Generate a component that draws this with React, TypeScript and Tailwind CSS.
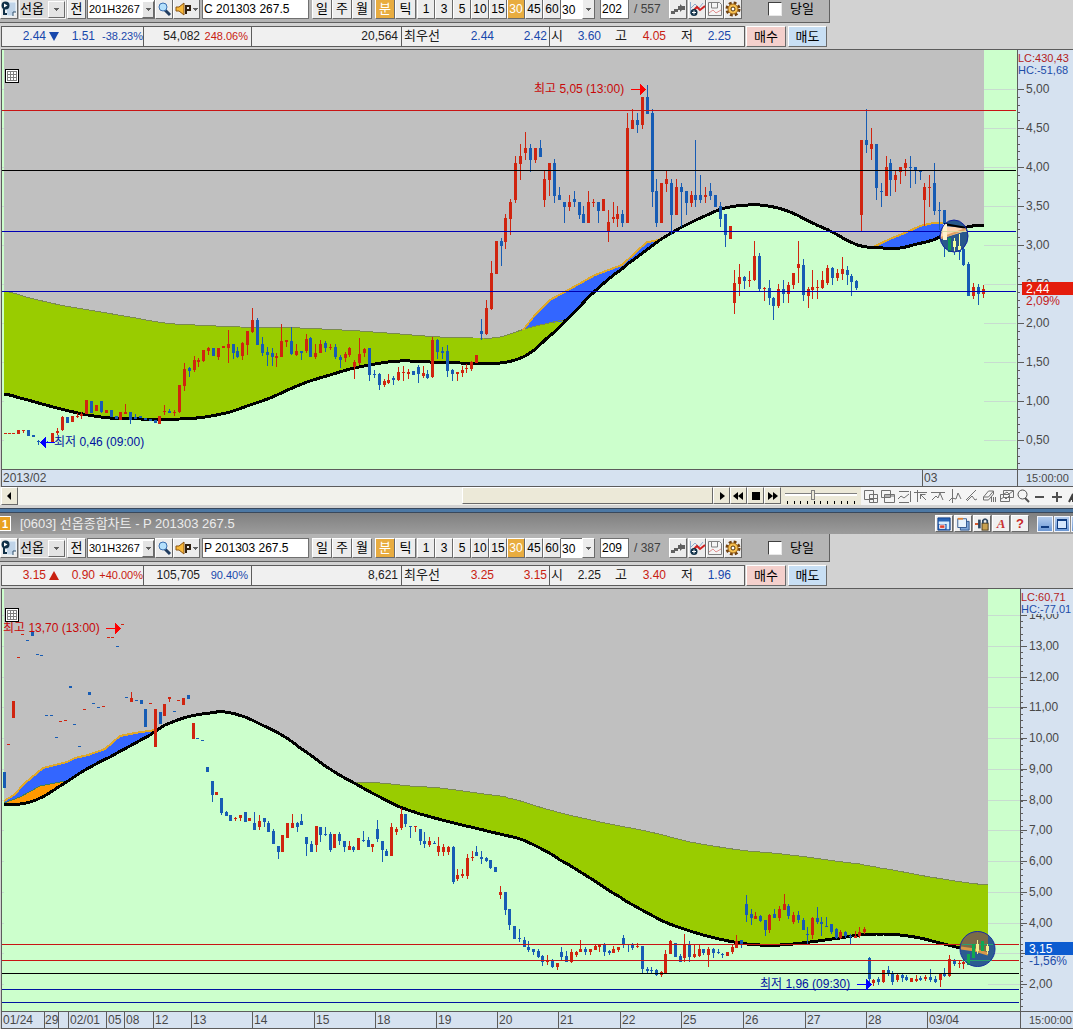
import type { ReactNode } from "react";
import clsx from "clsx";

const FONT = "font-['Liberation_Sans','Noto_Sans_CJK_KR',sans-serif]";
const BEVEL = "border border-t-white border-l-white border-r-[#6a6a6a] border-b-[#6a6a6a]";
const RED = "#d0240f";
const BLUE = "#175cb4";

type Bar = { color: string; x: number; high: number; low: number; top: number; bottom: number };
type Shape = { points: string; fill: string };
type Curve = { points: string; stroke: string; width: number };
type Level = { y: number; color: string };

type ChartSpec = {
  left: number;
  top: number;
  width: number;
  height: number;
  dataEnd: number;
  axisWidth: number;
  bars: Bar[];
  shapes: Shape[];
  curves: Curve[];
  levels: Level[];
  scale: { label: string; y: number }[];
  minor: number;
  lc: string;
  hc: string;
  price: { value: string; rate: string; y: number; up: boolean };
  high: { text: string; x: number; y: number; arrow: number };
  low: { text: string; x: number; y: number; arrow: number; toLeft: boolean };
  marker: ReactNode;
};

// "r18 430 434" is a plain body, two more numbers give the body inside the wick
function parseBars(source: string): Bar[] {
  return source.split(",").map((item) => {
    const entry = item.trim();
    const [x, high, low, top = high, bottom = low] = entry.slice(1).split(" ").map(Number);
    return { color: entry[0] === "r" ? RED : BLUE, x, high, low, top, bottom };
  });
}

type Point = [number, number];

const toPoints = (source: string): Point[] => source.split(" ").map((p) => p.split(",").map(Number) as Point);

// Catmull-Rom through the given points
function smooth(source: string): string {
  const pts = toPoints(source);
  const out: Point[] = [];
  for (let i = 0; i < pts.length - 1; i++) {
    const p0 = pts[Math.max(0, i - 1)];
    const p1 = pts[i];
    const p2 = pts[i + 1];
    const p3 = pts[Math.min(pts.length - 1, i + 2)];
    for (let k = 0; k < 6; k++) {
      const t = k / 6;
      const y =
        0.5 *
        (2 * p1[1] +
          (p2[1] - p0[1]) * t +
          (2 * p0[1] - 5 * p1[1] + 4 * p2[1] - p3[1]) * t * t +
          (3 * p1[1] - p0[1] - 3 * p2[1] + p3[1]) * t * t * t);
      out.push([p1[0] + (p2[0] - p1[0]) * t, Math.round(y * 10) / 10]);
    }
  }
  out.push(pts[pts.length - 1]);
  return out.map((p) => p.join(",")).join(" ");
}

// the part of a curve between two x values, walked right to left
function back(source: string, from: number, to: number): string {
  return toPoints(source)
    .filter((p) => p[0] <= from && p[0] >= to)
    .reverse()
    .map((p) => p.join(","))
    .join(" ");
}

const CALL_BARS = parseBars(
  "r5 433 434,r9 433 434,r13 433 434,r18 430 434,r23 430 433 430 431,b28 430 436,b33 435 437,b38 440 445 441 442,b47 441 443 442 443,r52 433 442,r57 428 435 431 433,r62 416 431 417 430,b67 417 423,r72 416 422,r77 413 418 416 417,r81 412 419 414 416,r86 400 414,b91 401 413,r96 405 411,b101 401 413 401 412,r106 410 413,b111 410 417,b116 416 419,r120 412 420,r125 404 414 412 414,b130 412 424 412 420,b135 414 419 417 419,b140 416 418,b145 418 420,b150 419 421,b155 420 423,r159 416 424,r164 405 415 411 412,b169 409 413 411 413,r174 410 416 412 413,r179 385 413 385 412,r184 363 391 369 386,b189 367 377 368 371,r194 356 372 360 370,r198 358 367 360 362,r203 350 362 350 361," +
    "r208 347 355 348 351,b213 348 356,r218 348 360 348 357,r223 346 348,r228 330 363 344 348,b233 344 359 344 353,b237 347 358 351 357,r242 342 360 343 356,r247 331 355 331 345,r252 308 333 320 332,b257 318 345 320 345,b262 337 356 344 353,b267 347 366 352 355,b272 348 366 353 357,r276 353 367 356 358,r281 324 357 341 357,r286 340 347 340 342,b291 327 355 341 354,r296 344 356 351 355,b301 351 360 351 353,r306 334 353 339 351,b310 337 357 338 357,r315 344 359 353 357,r320 340 353 344 353,b325 341 352 343 348,r330 344 350 347 348,b335 344 359 347 357,b340 355 368 357 360,r345 352 362 354 358,r349 347 357 348 355,r354 360 379 362 367,r359 338 365 354 363,r364 348 357 349 353,b369 348 381 348 375,b374 370 378 374 375,b379 373 390 374 385,r384 379 387 381 385,r388 374 384 380 383,b393 376 385 378 380,r398 367 381 372 380," +
    "r403 366 381 372 373,r408 369 379 372 374,b413 371 375,b418 365 383 367 374,r423 366 378 373 376,b427 370 379 374 378,r432 337 378 340 377,b437 339 359 340 352,b442 347 359 351 353,b447 345 377 351 371,b452 369 381 370 374,r457 372 381 372 374,r462 366 377 370 373,r466 364 373 368 369,r471 361 371 362 369,r476 355 363,b481 319 340 331 334,r486 300 335 308 334,r491 261 310 273 309,r496 241 274,b501 238 266 241 246,r505 214 249 218 242,r510 199 235 202 219,r515 156 203 163 200,r520 144 180 156 164,r525 132 160 148 153,b530 144 172 148 160,r535 148 163 148 160,b540 140 157 148 157,r544 171 207 179 200,r549 163 196 163 180,b554 159 203 163 196,b559 187 200 195 200,b564 202 223 202 207,r569 195 211 202 207,b574 191 207 199 202,b579 202 219 202 215,b583 206 223 214 223,r588 191 223 202 223,r593 199 207 202 203,b598 202 223 202 211," +
    "r603 199 211,r608 210 242 222 232,r613 202 223 217 219,r617 206 227 214 219,b622 210 227 214 223,r627 113 223 128 223,r632 109 129 120 129,b637 113 133 120 125,r642 97 129 97 125,b647 85 114 97 114,b652 109 207 113 192,b656 179 227 191 223,r661 183 223,r666 171 192 179 184,b671 179 235 183 215,r676 179 215 187 215,b681 183 227 187 192,b686 191 215 191 203,r691 191 207 195 203,b695 140 207 195 200,b700 175 203 195 200,r705 187 203 195 197,b710 183 200 191 196,b715 195 207,b720 202 227 206 219,b725 214 247 214 235,r730 226 239,r734 270 314 283 303,r739 264 296 277 284,b744 276 289 277 281,r749 271 287 280 281,r754 241 281 256 280,b759 253 291 256 289,r764 287 301 288 289,b769 280 305 288 298,b773 297 320 298 306,r778 284 308 289 306,b783 280 303 289 294,r788 282 303 285 294,r793 273 289 273 285,r798 241 283 264 268," +
    "b803 259 301 265 295,r808 287 308 289 296,r812 270 299 287 290,r817 280 299 287 288,r822 271 289 280 288,r827 265 285 268 283,b832 267 285 268 278,r837 269 281 273 278,r842 257 280 269 274,b847 266 285 270 275,b851 274 296 276 282,b856 280 290 281 288,r861 140 231 140 215,b866 109 153 140 145,r871 128 160 144 149,b876 144 200 144 188,b881 183 207 191 192,r886 156 196 167 196,b890 159 196 163 180,r895 171 192 175 180,r900 167 184 167 172,r905 159 176 163 168,b910 156 188 167 168,b915 167 184 167 171,b920 170 180 170 172,r924 183 226 187 200,r929 175 207 187 188,b934 163 215 183 211,b939 202 230 210 211,b944 210 257 210 224,b949 238 252 244 250,b954 239 255 244 247,b959 240 260 246 252,b963 241 266 249 265,b968 262 296 264 296,r973 283 299 287 296,b978 284 305 287 294,r983 285 298 289 294",
);

const PUT_BARS = parseBars(
  "r8 744 745,r18 657 658,r22 634 635,r60 721 722,r65 720 721,r84 709 710,r103 706 707,r108 637 638,r112 637 638,r122 624 625,r150 703 704,r178 700 701,b27 640 641,b37 654 655,b41 655 656,b46 715 716,b51 715 716,b56 737 738,b74 724 725,b79 746 747,b93 703 704,b98 707 708,b117 646 647,b126 697 698,b136 700 701,b174 711 712,b197 738 739,b202 740 741,b4 772 788,r13 701 718,b32 632 636,b70 686 688,b89 692 695,r131 692 702 698 702,b141 700 704,b145 709 727,r155 709 747,b160 712 724,r164 704 716,r169 697 702 697 699,r183 698 705,b188 695 699,r193 723 739,b207 767 772,b212 781 802 781 795,r216 792 795,b221 798 815 798 813,b226 811 816 812 816,b230 815 821,r235 817 821 818 819,r240 815 821 815 818,b245 812 822,r249 818 821,b254 812 830 823 830,r259 815 830 821 827,b264 818 827 818 822,b268 821 832 823 832,b273 829 844 831 844,b278 846 859 846 852," +
    "r282 835 852,r287 823 838,r292 814 828 823 828,b297 822 832 823 827,b301 814 825 821 825,b306 837 856 837 844,b311 841 852 844 852,r316 826 852 826 845,b320 827 842 827 835,b325 827 836 834 835,b330 832 852 834 850,r334 834 848,b339 832 845 834 841,b344 841 852 841 847,r349 841 850 846 850,b353 846 852 847 850,r358 838 850,b363 831 842 840 841,b368 837 847 840 847,r372 844 852 844 847,b377 820 842 829 839,b382 841 862 841 850,b386 849 856 851 856,r391 823 856 827 856,r396 827 835 829 832,r401 808 830 814 828,b405 814 827 814 824,b410 826 838 826 827,r415 826 832 826 827,b420 829 845 829 841,b424 832 848 841 844,r429 837 847 841 845,b434 841 844 843 844,r438 837 856 846 852,r443 844 856 847 852,r448 846 855 847 852,b453 846 884 847 882,r457 869 881 875 879,r462 869 878 874 876,r467 854 879 858 876,r472 851 861 857 858," +
    "b476 846 856 852 856,b481 851 864 857 859,b486 857 862 858 861,b490 860 869 860 868,b495 867 872,r500 886 899 892 895,b505 892 915 892 910,b509 909 930 909 925,b514 926 939,b519 929 942 938 939,b524 937 947 940 947,b528 941 952 947 950,b533 949 955 949 952,b538 949 958 951 957,b542 955 966 956 962,r547 955 965 961 962,b552 959 968 960 967,r557 963 970 963 967,b561 947 960 952 957,b566 951 962 956 962,r571 949 963 952 962,r576 951 957 952 955,r580 940 952 949 952,b585 947 955 949 952,r590 949 955 949 952,r595 944 950 946 950,r599 945 952 945 947,b604 943 956 944 952,b609 950 955 951 953,r613 946 953 949 953,r618 947 952 947 950,b623 935 948 938 945,b628 944 952 944 945,b632 943 950 945 948,r637 943 948 946 947,b642 946 973 946 969,b647 967 973 969 971,b651 967 973 970 971,b656 969 976 970 975,r661 971 977 972 975,r665 950 973 954 973,r670 940 954 941 954," +
    "b675 943 957,b680 954 962 956 962,r684 934 962 944 958,b689 941 962 944 957,r694 944 958 954 957,r699 945 957 949 956,b703 949 955 949 953,r708 947 967 949 955,b713 948 958 949 953,b718 949 954 952 953,b722 953 958 954 955,r727 952 956,r732 945 954 947 952,r736 935 948 941 948,b741 940 948 940 944,b746 895 922 904 915,b751 909 925 914 918,r755 912 919 916 919,b760 915 922 916 921,b765 920 936 920 930,r769 914 933 915 930,b774 909 918 914 918,r779 906 921 909 918,r784 894 910 904 910,b788 904 919 906 916,r793 912 924 915 922,b798 911 923 915 920,b803 918 930 920 930,b807 927 944 934 935,r812 917 939 918 935,b817 907 924 918 922,b821 917 936 922 924,b826 917 927 926 927,b831 924 934 924 932,b836 928 939 929 938,r840 930 939 932 938,b845 931 938 932 936,b850 934 944 936 937,r855 931 938 936 938,r859 927 938 932 936,r864 927 934 929 932," +
    "b869 957 985 958 979,r873 979 986 980 983,b878 977 985 979 982,r883 970 983 970 982,b888 966 976 970 974,b892 971 985 973 982,r897 973 982 975 980,b902 973 982 975 978,b906 975 981 977 980,r911 978 982,r916 975 982 979 981,b920 976 981 978 980,r925 975 981 977 979,b930 969 982 977 980,b935 976 983 979 982,r940 973 987 974 980,b944 968 977 973 976,r949 955 977 959 976,b954 959 966 960 964,r959 961 968 963 964,r963 959 969 962 964,b968 952 965 955 962",
);

const CALL_MA = smooth(
  "4,394 20,398 42,404 65,410 88,415 110,418 140,419 180,419 205,417 230,412 250,405 270,398 290,389 310,381 330,375 350,369 375,364 400,361 430,362 460,363 500,363 515,360 530,353 546,339 565,321 594,292 622,269 640,255 660,240 680,228 705,216 725,208 748,205 768,206 790,212 815,224 830,231 853,243 867,247 883,248 900,248 917,244 933,240 948,233 967,227 984,225",
);
const CALL_UPPER = smooth(
  "4,291 30,298 60,305 95,311 130,317 165,323 195,325 240,327 300,328 360,331 400,334 440,337 480,338 500,337 525,329 545,324 565,320",
);
const CALL_FAST_1 = "523,330 535,315 550,300 570,289 595,275 622,265 636,252 647,242 655,241 665,237";
const CALL_FAST_2 = "873,247 890,239 907,232 920,226 933,223 945,223 966,227";

const PUT_MA = smooth(
  "4,804 20,804 38,799 60,786 85,770 110,757 130,746 150,735 165,725 187,717 210,713 225,712 245,717 262,725 280,734 300,748 330,769 356,784 380,797 400,807 420,814 450,822 475,828 500,834 520,839 540,848 560,860 590,878 620,897 640,909 665,922 690,931 715,938 740,943 760,945 780,945 810,942 840,938 860,935 880,934 900,935 920,938 940,943 960,948 988,953",
);
const PUT_UPPER = smooth(
  "354,782 380,783 410,786 440,788 470,792 500,796 508,798 550,810 587,819 620,826 650,832 690,842 740,850 790,855 860,864 880,868 930,877 988,885",
);
const PUT_FAST = "4,801 14,795 25,783 43,768 67,762 75,758 88,755 105,749 120,736 135,733 155,730";
const PUT_MID = "4,803 20,797 40,786 65,781";

const CALL: ChartSpec = {
  left: 2,
  top: 50,
  width: 1015,
  height: 419,
  dataEnd: 984,
  axisWidth: 55,
  bars: CALL_BARS,
  shapes: [
    { points: `${CALL_MA} 984,470 4,470`, fill: "#ccffcc" },
    { points: `${CALL_UPPER} ${back(CALL_MA, 565, 4)}`, fill: "#99cc00" },
    { points: `${CALL_FAST_1} ${back(CALL_MA, 660, 565)} 545,324 525,329`, fill: "#3366ff" },
    { points: `${CALL_FAST_2} ${back(CALL_MA, 966, 875)}`, fill: "#3366ff" },
  ],
  curves: [
    { points: CALL_UPPER, stroke: "#7a8a50", width: 1 },
    { points: CALL_FAST_1, stroke: "#e0a828", width: 2 },
    { points: CALL_FAST_2, stroke: "#e0a828", width: 2 },
    { points: CALL_MA, stroke: "#000", width: 3 },
  ],
  levels: [
    { y: 110, color: "#c81414" },
    { y: 170, color: "#000" },
    { y: 231, color: "#0000b4" },
    { y: 291, color: "#0000b4" },
  ],
  scale: ["5,00", "4,50", "4,00", "3,50", "3,00", "2,50", "2,00", "1,50", "1,00", "0,50"].map((label, i) => ({
    label,
    y: Math.round(89 + i * 39.05),
  })),
  minor: 5,
  lc: "LC:430,43",
  hc: "HC:-51,68",
  price: { value: "2,44", rate: "2,09%", y: 282, up: true },
  high: { text: "최고 5,05 (13:00)", x: 534, y: 89, arrow: 631 },
  low: { text: "최저 0,46 (09:00)", x: 54, y: 442, arrow: 40, toLeft: true },
  marker: (
    <g>
      <ellipse cx="954" cy="236" rx="14" ry="16" fill="#28588c" />
      <path d="M943 226 L966 228 L966 231 L940 239 Z" fill="#ffd2b0" />
      <path d="M944 224 L967 228" stroke="#000" strokeWidth="2" />
      <path d="M941 238 L952 234 L966 229" stroke="#e0a060" strokeWidth="2" fill="none" />
      <path d="M945 224 v16" stroke="#fff2cc" strokeWidth="4" />
      <path d="M949.5 238 v14" stroke="#109858" strokeWidth="3" />
      <path d="M954.5 238 v14 M959.5 234 v16" stroke="#f0ffa0" strokeWidth="1" />
      <path d="M954.5 241 v6 M959.5 246 v4" stroke="#f0ffa0" strokeWidth="3" />
      <path d="M941 231.5 H967" stroke="#d8d8a0" />
      <ellipse cx="954" cy="236" rx="14" ry="16" fill="none" stroke="#1020a0" />
    </g>
  ),
};

const PUT: ChartSpec = {
  left: 2,
  top: 589,
  width: 1018,
  height: 422,
  dataEnd: 988,
  axisWidth: 52,
  bars: PUT_BARS,
  shapes: [
    { points: `${PUT_MA} 988,1012 4,1012`, fill: "#ccffcc" },
    { points: `${PUT_UPPER} ${back(PUT_MA, 988, 356)}`, fill: "#99cc00" },
    { points: `${PUT_FAST} ${back(PUT_MA, 155, 60)} 65,781 40,786 20,797 4,803`, fill: "#3366ff" },
    { points: `${PUT_MID} ${back(PUT_MA, 65, 4)}`, fill: "#ff9900" },
  ],
  curves: [
    { points: PUT_UPPER, stroke: "#7a8a50", width: 1 },
    { points: PUT_MID, stroke: "#3c8060", width: 1 },
    { points: PUT_FAST, stroke: "#e0a828", width: 2 },
    { points: PUT_MA, stroke: "#000", width: 3 },
  ],
  levels: [
    { y: 944, color: "#c81414" },
    { y: 960, color: "#c81414" },
    { y: 973, color: "#000" },
    { y: 989, color: "#0014a0" },
    { y: 1002, color: "#0014a0" },
  ],
  scale: ["14,00", "13,00", "12,00", "11,00", "10,00", "9,00", "8,00", "7,00", "6,00", "5,00", "4,00", "", "2,00"].map(
    (label, i) => ({ label, y: Math.round(615 + i * 30.75) }),
  ),
  minor: 5,
  lc: "LC:60,71",
  hc: "HC:-77,01",
  price: { value: "3,15", rate: "-1,56%", y: 942, up: false },
  high: { text: "최고 13,70 (13:00)", x: 3, y: 628, arrow: 106 },
  low: { text: "최저 1,96 (09:30)", x: 760, y: 984, arrow: 857, toLeft: false },
  marker: (
    <g>
      <circle cx="977.5" cy="949" r="17.5" fill="#2c5c90" />
      <path d="M960 949 A17.5 17.5 0 0 1 988 935 V954 L975 950 Z" fill="#7a6a48" />
      <path d="M961 948 L975 950 L988 954" stroke="#d89848" strokeWidth="3" fill="none" />
      <path d="M962 944.5 H993 M962 960.5 H992" stroke="#28a070" />
      <path d="M968.5 954 v11 M973.5 944 v14 M982.5 941 v10" stroke="#10a850" strokeWidth="3" />
      <path d="M977.5 940 v14 M987.5 944 v10" stroke="#f0f090" />
      <path d="M977.5 944 v7 M987.5 946 v5" stroke="#f0f090" strokeWidth="3" />
      <circle cx="977.5" cy="949" r="17.5" fill="none" stroke="#1830a0" />
    </g>
  ),
};

function Arrow({ x, y, color, toLeft }: { x: number; y: number; color: string; toLeft?: boolean }) {
  const points = toLeft
    ? `${x},${y + 0.5} ${x + 6},${y - 5} ${x + 6},${y + 6}`
    : `${x + 15},${y + 0.5} ${x + 9},${y - 5} ${x + 9},${y + 6}`;
  return (
    <g fill={color}>
      <rect x={x} y={y} width="15" height="1" />
      <polygon points={points} />
    </g>
  );
}

function Note({ spec, text, x, y, className }: { spec: ChartSpec; text: string; x: number; y: number; className: string }) {
  return (
    <span
      className={clsx("absolute -translate-y-1/2 text-[12px] whitespace-nowrap", className)}
      style={{ left: `${((x - spec.left) / spec.width) * 100}%`, top: y - spec.top }}
    >
      {text}
    </span>
  );
}

function Plot({ spec }: { spec: ChartSpec }) {
  const { left, top, width, height, dataEnd } = spec;
  return (
    <div className="relative min-w-0 flex-1 bg-[#ccffcc]">
      <svg
        viewBox={`${left} ${top} ${width} ${height}`}
        preserveAspectRatio="none"
        shapeRendering="crispEdges"
        className="block w-full"
        style={{ height }}
      >
        <rect x="4" y={top} width={dataEnd - 4} height={height} fill="#c0c0c0" />
        {spec.scale.map((s) => (
          <g key={s.y} fill="#c8dcd0">
            <rect x={dataEnd} y={s.y} width="32" height="1" />
            <rect x={left} y={s.y} width="2" height="1" />
          </g>
        ))}
        {spec.shapes.map((s) => (
          <polygon key={s.points} points={s.points} fill={s.fill} />
        ))}
        {spec.curves.map((c) => (
          <polyline key={c.points} points={c.points} fill="none" stroke={c.stroke} strokeWidth={c.width} />
        ))}
        {spec.bars.map((b, i) => (
          <g key={i} fill={b.color}>
            <rect x={b.x} y={b.high} width="1" height={b.low - b.high} />
            <rect x={b.x - 1} y={b.top} width="3" height={Math.max(1, b.bottom - b.top)} />
          </g>
        ))}
        {spec.levels.map((l) => (
          <rect key={l.y} x={left} y={l.y} width={width - 1} height="1" fill={l.color} />
        ))}
        <Arrow x={spec.high.arrow} y={spec.high.y} color="#f00" />
        <Arrow x={spec.low.arrow} y={spec.low.y} color="#00f" toLeft={spec.low.toLeft} />
        <g shapeRendering="auto">{spec.marker}</g>
      </svg>
      <Note spec={spec} text={spec.high.text} x={spec.high.x} y={spec.high.y} className="text-[#c80808]" />
      <Note spec={spec} text={spec.low.text} x={spec.low.x} y={spec.low.y} className="text-[#0010a0]" />
      <button type="button" aria-label="데이터 표" className="absolute left-[3px] top-[19px] size-[14px]">
        <svg viewBox="0 0 14 14" className="block size-full" shapeRendering="crispEdges">
          <rect x="0.5" y="0.5" width="13" height="13" fill="#fff" stroke="#000" />
          <path d="M2.5 2.5h9v9h-9z M2.5 5.5h9 M2.5 8.5h9 M5.5 2.5v9 M8.5 2.5v9" fill="none" stroke="#808080" />
        </svg>
      </button>
    </div>
  );
}

function PriceAxis({ spec }: { spec: ChartSpec }) {
  const { top, height, axisWidth, scale, price } = spec;
  const step = (scale[1].y - scale[0].y) / spec.minor;
  const count = Math.floor((top + height - scale[0].y) / step);
  return (
    <div className="shrink-0 border-l border-[#5c5c5c] bg-[#d6e2f0]" style={{ width: axisWidth + 1 }}>
      <svg width={axisWidth} height={height} className="block text-[12px]" shapeRendering="crispEdges">
        <g fill="#5c5c5c">
          {Array.from({ length: count + 1 }, (_, i) => (
            <rect key={i} x="0" y={Math.round(scale[0].y - top + i * step)} width="2" height="1" />
          ))}
          {scale.map((s) => (
            <rect key={s.y} x="0" y={s.y - top} width="6" height="1" />
          ))}
        </g>
        <g fill="#484848">
          {scale.map((s) => (
            <text key={s.y} x="8" y={s.y - top + 4}>
              {s.label}
            </text>
          ))}
        </g>
        <rect width={axisWidth} height="25" fill="#d6e2f0" />
        <g className="text-[11px]">
          <text x="0" y="12" fill="#b41c1c">
            {spec.lc}
          </text>
          <text x="0" y="24" fill="#1c4ca8">
            {spec.hc}
          </text>
        </g>
        <rect x="4" y={price.y - top} width={axisWidth} height="13" fill={price.up ? "#e41c0c" : "#0c5cd0"} />
        <text x="8" y={price.y - top + 11} fill="#fff">
          {price.value}
        </text>
        <text x="8" y={price.y - top + 23} fill={price.up ? "#c01c1c" : "#1c4ca8"}>
          {price.rate}
        </text>
      </svg>
    </div>
  );
}

type DateMark = { label: string; width: number };

const CALL_DATES: DateMark[] = [{ label: "2013/02", width: 920 }];
const PUT_DATES: DateMark[] = [
  { label: "01/24", width: 42 },
  { label: "29", width: 14 },
  { label: "", width: 10 },
  { label: "02/01", width: 38 },
  { label: "05", width: 18 },
  { label: "08", width: 29 },
  { label: "12", width: 38 },
  { label: "13", width: 61 },
  { label: "14", width: 62 },
  { label: "15", width: 61 },
  { label: "18", width: 61 },
  { label: "19", width: 61 },
  { label: "20", width: 61 },
  { label: "21", width: 62 },
  { label: "22", width: 61 },
  { label: "25", width: 62 },
  { label: "26", width: 62 },
  { label: "27", width: 61 },
  { label: "28", width: 61 },
];

function DateAxis({ marks, last, axisWidth }: { marks: DateMark[]; last: string; axisWidth: number }) {
  return (
    <div className="flex h-[18px] border-y border-[#5c5c5c] bg-[#d6e2f0] text-[12px] leading-4 text-[#484848]">
      {marks.map((m, i) => (
        <div
          key={m.label + i}
          className={clsx("shrink-0", i > 0 && "border-l border-[#5c5c5c]", m.width > 14 && "pl-px")}
          style={{ width: m.width }}
        >
          {m.label}
        </div>
      ))}
      <div className="flex-1 border-l border-[#5c5c5c] pl-px">{last}</div>
      <div
        className="shrink-0 border-l border-[#5c5c5c] pl-2 text-[11px] whitespace-nowrap"
        style={{ width: axisWidth + 1 }}
      >
        15:00:00
      </div>
    </div>
  );
}

function ToolButton({ children, active, className, label }: { children: ReactNode; active?: boolean; className?: string; label?: string }) {
  return (
    <button
      type="button"
      aria-label={label}
      className={clsx(
        "flex h-5 shrink-0 items-center justify-center",
        BEVEL,
        active ? "bg-[#e8ac40] text-white" : "bg-[#ececec] text-black",
        className ?? "w-[18px]",
      )}
    >
      {children}
    </button>
  );
}

function Caret() {
  return (
    <svg viewBox="0 0 5 3" width="5" height="3" shapeRendering="crispEdges">
      <path d="M0 0h5L2.5 3z" fill="#606060" />
    </svg>
  );
}

const ICON = { width: 16, height: 16, viewBox: "0 0 16 16", fill: "none" } as const;

function Toolbar({ code, name, position, total, className }: { code: string; name: string; position: string; total: string; className: string }) {
  return (
    <div className={clsx("flex items-end overflow-hidden", className)}>
      <div className="flex h-full w-[830px] shrink-0 items-end border-r border-b border-[#606060] bg-[#b4b4b4] pb-[3px]">
        <ToolButton label="페이지">
          <svg {...ICON}>
            <path d="M4 1h11v11l-3 3H6z" fill="#c0d4e8" stroke="#f0f8fc" />
            <path d="M12 15v-4h3" fill="#fff" stroke="#30506c" />
            <circle cx="4.5" cy="4.5" r="4" fill="#103048" />
            <path d="M3 2.5l3.5 2-3.5 2z" fill="#fff" />
            <path d="M3 8v5h3" stroke="#103048" strokeWidth="2" />
          </svg>
        </ToolButton>
        <div className="relative ml-px flex h-5 w-[47px] shrink-0 items-center border border-[#f4f4f4] bg-[#dcdcdc]">
          <select aria-label="종목 구분" className="size-full appearance-none leading-4">
            <option>선옵</option>
          </select>
          <span className={clsx("pointer-events-none absolute right-0 flex h-[17px] w-[17px] items-center justify-center bg-[#e4e4e4]", BEVEL)}>
            <Caret />
          </span>
        </div>
        <ToolButton className="ml-px w-[19px]">전</ToolButton>
        <div className="ml-px flex h-5 w-[68px] shrink-0 items-center border border-[#707070] bg-white">
          <input aria-label="종목 코드" defaultValue={code} className="h-4 w-[54px] pl-px text-[11px] outline-none" />
          <button type="button" aria-label="코드 목록" className={clsx("flex h-[17px] w-3 items-center justify-center bg-[#e4e4e4]", BEVEL)}>
            <Caret />
          </button>
        </div>
        <ToolButton label="검색">
          <svg {...ICON}>
            <path d="M9 9l5 5" stroke="#203c60" strokeWidth="3" />
            <circle cx="7" cy="6" r="4" fill="#b4e0fc" stroke="#3c70b0" />
          </svg>
        </ToolButton>
        <ToolButton className="w-[27px]" label="소리">
          <svg {...ICON} width="16">
            <path d="M1 6h3l5-4v12L4 10H1z" fill="#f8b838" stroke="#8c5410" />
            <path d="M11 13V5h4v4h-4" stroke="#302010" strokeWidth="2" />
          </svg>
          <span className="ml-0.5">
            <Caret />
          </span>
        </ToolButton>
        <input aria-label="종목명" readOnly value={name} className="ml-0.5 h-5 w-[107px] shrink-0 border border-[#707070] bg-white pl-px text-[12px] outline-none" />
        <div className="ml-[3px] flex">
          {["일", "주", "월"].map((t) => (
            <ToolButton key={t} className="w-5">
              {t}
            </ToolButton>
          ))}
        </div>
        <div className="ml-[3px] flex">
          <ToolButton active className="w-5">
            분
          </ToolButton>
          <ToolButton className="w-[21px]">틱</ToolButton>
        </div>
        <div className="ml-px flex text-[12px]">
          {["1", "3", "5", "10", "15", "30", "45", "60"].map((t) => (
            <ToolButton key={t} active={t === "30"}>
              {t}
            </ToolButton>
          ))}
        </div>
        <input aria-label="주기" defaultValue="30" className="h-5 w-[21px] shrink-0 border-t border-[#707070] bg-white pl-px text-[12px] outline-none" />
        <ToolButton className="w-[13px]" label="주기 목록">
          <Caret />
        </ToolButton>
        <input aria-label="위치" defaultValue={position} className="ml-[5px] h-5 w-[29px] shrink-0 border border-[#707070] bg-white pl-px text-[12px] outline-none" />
        <span className="ml-[5px] w-[35px] shrink-0 text-[12px] leading-5 text-[#404040]">/ {total}</span>
        <ToolButton label="연결">
          <svg {...ICON}>
            <path d="M1 13v-3h3V8h4V5h2V3l2 2h3v4h-3l-2 2V9H8v2H5v2z" fill="#606060" />
          </svg>
        </ToolButton>
        <ToolButton className="ml-px w-[18px]" label="지표 추가">
          <svg {...ICON}>
            <path d="M1.5 1v12M2 7l4-4 4 4 4-5" stroke="#8caccc" />
            <path d="M4 10l4-4 3 3 5-4" stroke="#d02020" strokeWidth="2" />
            <circle cx="5" cy="11.5" r="3.5" fill="#103048" />
            <path d="M5 9.5v4M3 11.5h4" stroke="#fff" />
          </svg>
        </ToolButton>
        <ToolButton label="저장">
          <svg {...ICON}>
            <path d="M1.5 1.5h11l2 2V14.500h-13z" fill="#f4f4f4" stroke="#808080" />
            <path d="M4.5 2v5h6V2" stroke="#808080" />
            <path d="M2 12l4-3 3 3 5-3" stroke="#e09090" />
          </svg>
        </ToolButton>
        <ToolButton label="설정">
          <svg {...ICON}>
            <circle cx="8" cy="8" r="6" stroke="#704010" strokeWidth="3" strokeDasharray="2.7 2" />
            <circle cx="8" cy="8" r="5" fill="#f8c050" stroke="#a06818" />
            <circle cx="8" cy="8" r="2" fill="#fff" stroke="#503008" />
          </svg>
        </ToolButton>
        <label className="ml-[26px] flex h-5 items-center gap-2 whitespace-nowrap">
          <input type="checkbox" className="size-[14px] appearance-none border border-t-[#404040] border-l-[#404040] border-r-[#e8e8e8] border-b-[#e8e8e8] bg-white" />
          당일
        </label>
      </div>
    </div>
  );
}

type Quote = {
  price: string;
  change: string;
  rate: string;
  up: boolean;
  volume: string;
  volumeRate: string;
  volumeUp: boolean;
  open: string;
  ask: string;
  bid: string;
  first: string;
  high: string;
  low: string;
  firstPlain?: boolean;
};

function QuoteBar({ q }: { q: Quote }) {
  const tone = q.up ? "text-[#c82010]" : "text-[#1848ac]";
  return (
    <div className="flex pt-[3px] pb-0.5 pl-px leading-[18px]">
      <div className="flex h-[21px] w-[744px] shrink-0 divide-x divide-[#5c5c5c] border border-[#5c5c5c] bg-[#f0f0f0] text-right text-[12px] text-[#202020]">
        <div className={clsx("flex w-[142px] shrink-0", tone)}>
          <span className="w-11">{q.price}</span>
          <svg viewBox="0 0 10 9" className="mt-[5px] ml-[3px] h-[9px] w-2.5">
            <path d={q.up ? "M0 9h10L5 0z" : "M0 0h10L5 9z"} fill="currentColor" />
          </svg>
          <span className="w-9">{q.change}</span>
          <span className="w-12 text-[11px]">{q.rate}</span>
        </div>
        <div className="flex w-[108px] shrink-0">
          <span className="w-14">{q.volume}</span>
          <span className={clsx("w-12 text-[11px]", q.volumeUp ? "text-[#c82010]" : "text-[#1848ac]")}>{q.volumeRate}</span>
        </div>
        <div className="w-[150px] shrink-0 pr-[3px]">{q.open}</div>
        <div className="flex w-[148px] shrink-0 pl-0.5">
          <span className="w-9 text-[13px] whitespace-nowrap">최우선</span>
          <span className={clsx("w-[54px]", tone)}>{q.ask}</span>
          <span className={clsx("w-[53px]", tone)}>{q.bid}</span>
        </div>
        <div className="flex flex-1 pl-px">
          <span className="w-3 text-[13px]">시</span>
          <span className={clsx("w-[38px]", q.firstPlain ? "text-[#202020]" : "text-[#1848ac]")}>{q.first}</span>
          <span className="w-[26px] text-[13px]">고</span>
          <span className="w-[39px] text-[#c82010]">{q.high}</span>
          <span className="w-[27px] text-[13px]">저</span>
          <span className="w-[38px] text-[#1848ac]">{q.low}</span>
        </div>
      </div>
      <button type="button" className={clsx("ml-px h-[21px] w-10 bg-[#f4d0cc] text-black", BEVEL)}>
        매수
      </button>
      <button type="button" className={clsx("ml-0.5 h-[21px] w-[39px] bg-[#c8dff4] text-black", BEVEL)}>
        매도
      </button>
    </div>
  );
}

function Chart({ spec, marks, last }: { spec: ChartSpec; marks: DateMark[]; last: string }) {
  return (
    <div className="pl-px">
      <div className="border-t border-l border-[#5c5c5c]">
        <div className="flex">
          <Plot spec={spec} />
          <PriceAxis spec={spec} />
        </div>
        <DateAxis marks={marks} last={last} axisWidth={spec.axisWidth} />
      </div>
    </div>
  );
}

const PLAYBACK = [
  { label: "재생", d: "M6 4l5 4-5 4z" },
  { label: "뒤로", d: "M7 4v8L2 8z M12 4v8L7 8z" },
  { label: "정지", d: "M4 4h8v8H4z" },
  { label: "앞으로", d: "M3 4v8l5-4z M8 4v8l5-4z" },
];

const DRAWING = [
  { label: "분할", d: "M1.5 2.5h9v9h-9z M6.5 6.5h8v8h-8z M10.5 7v7 M7 10.500h7" },
  { label: "겹침", d: "M1.5 2.500h9v7h-9z M4.500 6.500h10v8h-10z M5 8h9" },
  { label: "구간", d: "M2 3.500h10 M2 14.500h10 M1 11l3-3 3 2 5-4 M13.500 3v11" },
  { label: "기준선", d: "M0 4.500h13 M3.500 2v12 M6 6l6 6 M6.500 11V6.500h5" },
  { label: "수평선", d: "M0 4.500h14 M1 12l4-4 2 2 2-5 3 7" },
  { label: "수직선", d: "M4.500 1v14 M1 13l3-3 4 1 2-6 3 6" },
  { label: "추세선", d: "M1 12L11 2 M2 13l5-5 3 4 2-1" },
  { label: "전체 삭제", d: "M1.500 9l5-6h5l-5 6z M1.500 9v3h5l5-6V3 M9.500 9v5 M11.500 9v5 M13.500 9v5" },
  { label: "차트 복사", d: "M4.500 2.500h10v7h-10z M1.500 6.500h9v7h-9z M2 11l3-2 2 2 3-3 M5 6l3-2 2 2 4-3" },
];

function ScrollRow() {
  return (
    <div className="flex h-[18px] bg-[#f2f2ec] pl-px">
      <button type="button" aria-label="왼쪽으로" className={clsx("h-[18px] w-[17px] bg-[#ece9d8]", BEVEL)}>
        <svg viewBox="0 0 15 16" className="h-4 w-[15px]">
          <path d="M9 4v8L5 8z" fill="#000" />
        </svg>
      </button>
      <div className="flex flex-1 justify-end">
        <div className={clsx("h-[17px] w-[251px] bg-[#ece9d8]", BEVEL)} />
      </div>
      {PLAYBACK.map((p) => (
        <button key={p.label} type="button" aria-label={p.label} className={clsx("h-[17px] w-[17px] bg-[#ece9d8]", BEVEL)}>
          <svg viewBox="0 0 15 15" className="size-[15px]">
            <path d={p.d} fill="#000" />
          </svg>
        </button>
      ))}
      <div className="flex w-20 flex-col bg-[#ece9d8] px-1">
        <input
          type="range"
          aria-label="속도"
          defaultValue={38}
          className="mt-0.5 h-2.5 w-full appearance-none bg-transparent [&::-webkit-slider-runnable-track]:h-[3px] [&::-webkit-slider-runnable-track]:border-t [&::-webkit-slider-runnable-track]:border-[#808080] [&::-webkit-slider-runnable-track]:bg-white [&::-webkit-slider-thumb]:-mt-1 [&::-webkit-slider-thumb]:h-2.5 [&::-webkit-slider-thumb]:w-1 [&::-webkit-slider-thumb]:appearance-none [&::-webkit-slider-thumb]:border [&::-webkit-slider-thumb]:border-[#808080] [&::-webkit-slider-thumb]:bg-[#ece9d8]"
        />
        <div className="mt-0.5 flex justify-between px-0.5">
          {Array.from({ length: 11 }, (_, i) => (
            <span key={i} className="h-[3px] w-px bg-black" />
          ))}
        </div>
      </div>
      <div className="flex w-[212px] shrink-0 gap-px overflow-hidden bg-[#f4f4f4] pl-0.5">
        {DRAWING.map((t) => (
          <button key={t.label} type="button" aria-label={t.label} className="h-[17px] w-4 shrink-0">
            <svg {...ICON}>
              <path d={t.d} stroke="#707070" />
            </svg>
          </button>
        ))}
        <button type="button" aria-label="확대경" className="h-[17px] w-4 shrink-0">
          <svg {...ICON}>
            <circle cx="6.5" cy="6.5" r="4.5" stroke="#505050" />
            <path d="M9 10l4 4" stroke="#505050" strokeWidth="2" />
          </svg>
        </button>
        <button type="button" aria-label="축소" className="h-[17px] w-4 shrink-0">
          <svg {...ICON}>
            <path d="M2 9h9" stroke="#505050" strokeWidth="2" />
          </svg>
        </button>
        <button type="button" aria-label="확대" className="h-[17px] w-4 shrink-0">
          <svg {...ICON}>
            <path d="M2 9h10M7 4v10" stroke="#505050" strokeWidth="2" />
          </svg>
        </button>
        <button type="button" aria-label="글자" className="h-[17px] w-4 shrink-0">
          <svg {...ICON}>
            <path d="M2 14l4-8v8M3 11h3" stroke="#404040" strokeWidth="2" />
          </svg>
        </button>
      </div>
    </div>
  );
}

function TitleBar({ title }: { title: string }) {
  const button = clsx("flex h-[17px] w-[18px] shrink-0 items-center justify-center bg-[#f0f0f0]", BEVEL);
  const blue =
    "flex size-4 shrink-0 items-center justify-center border border-[#f0f4fc] bg-linear-to-b from-[#b4cdee] to-[#6c98d4]";
  return (
    <div className="flex h-[21px] items-center overflow-hidden bg-linear-to-b from-[#808080] to-[#9c9c9c]">
      <span className="flex h-[15px] w-[11px] items-center justify-center border border-l-0 border-white bg-[#e8a020] font-bold text-white text-[11px]">1</span>
      <h2 className="ml-[9px] flex-1 text-[#ececec]">{title}</h2>
      <div className="flex gap-px">
        <button type="button" aria-label="창 연결" className={button}>
          <svg {...ICON} className="size-3.5">
            <path d="M1 1h14v14H1z" fill="#2864b8" stroke="#103c80" />
            <path d="M2 5h12v9h-3V8H2z" fill="#d8ecfc" />
            <path d="M3 9h6v4H3z" fill="#e04030" stroke="#fff" />
          </svg>
        </button>
        <button type="button" aria-label="창 복사" className={button}>
          <svg {...ICON} className="size-3.5">
            <path d="M5 5h10v10H5z" fill="#80a8d8" stroke="#285088" />
            <path d="M2 2h10v10H2z" fill="#e8f4fc" stroke="#285088" />
            <path d="M2 2h6" stroke="#e08030" strokeWidth="2" />
          </svg>
        </button>
        <button type="button" aria-label="고정" className={button}>
          <svg {...ICON} className="size-3.5">
            <path d="M0 8h5" stroke="#d04010" strokeWidth="2" />
            <path d="M5 3v10" stroke="#304860" strokeWidth="3" />
            <rect x="8" y="7" width="7" height="8" fill="#c8a050" stroke="#403010" />
            <path d="M9 7V4q2.5-3 5 0v3" stroke="#304860" strokeWidth="2" />
          </svg>
        </button>
        <button type="button" className={clsx(button, "font-['Liberation_Serif',serif] font-bold italic text-[#c83030]")}>
          A
        </button>
        <button type="button" className={clsx(button, "font-bold text-[#c82828]")}>?</button>
      </div>
      <div className="ml-2 flex w-9 gap-px overflow-hidden">
        <button type="button" aria-label="최소화" className={blue}>
          <span className="mt-1.5 h-0.5 w-2 bg-[#103c80]" />
        </button>
        <button type="button" aria-label="최대화" className={blue}>
          <span className="size-2.5 border border-t-2 border-[#103c80] bg-[#d8e8fc]" />
        </button>
        <button type="button" aria-label="닫기" className={blue} />
      </div>
    </div>
  );
}

export default function App() {
  return (
    <main className={clsx("overflow-hidden bg-[#d2d2d2] text-[13px] leading-4 text-black", FONT)}>
      <section>
        <Toolbar code="201H3267" name="C 201303 267.5" position="202" total="557" className="h-[23px]" />
        <QuoteBar
          q={{
            price: "2.44",
            change: "1.51",
            rate: "-38.23%",
            up: false,
            volume: "54,082",
            volumeRate: "248.06%",
            volumeUp: true,
            open: "20,564",
            ask: "2.44",
            bid: "2.42",
            first: "3.60",
            high: "4.05",
            low: "2.25",
          }}
        />
        <Chart spec={CALL} marks={CALL_DATES} last="03" />
        <ScrollRow />
      </section>
      <div className="mt-[3px] h-[5px] border-y border-[#38485c] bg-[#4c78a4]" />
      <section>
        <TitleBar title="[0603] 선옵종합차트 - P 201303 267.5" />
        <Toolbar code="301H3267" name="P 201303 267.5" position="209" total="387" className="h-7" />
        <QuoteBar
          q={{
            price: "3.15",
            change: "0.90",
            rate: "+40.00%",
            up: true,
            volume: "105,705",
            volumeRate: "90.40%",
            volumeUp: false,
            open: "8,621",
            ask: "3.25",
            bid: "3.15",
            first: "2.25",
            high: "3.40",
            low: "1.96",
            firstPlain: true,
          }}
        />
        <Chart spec={PUT} marks={PUT_DATES} last="03/04" />
      </section>
    </main>
  );
}
